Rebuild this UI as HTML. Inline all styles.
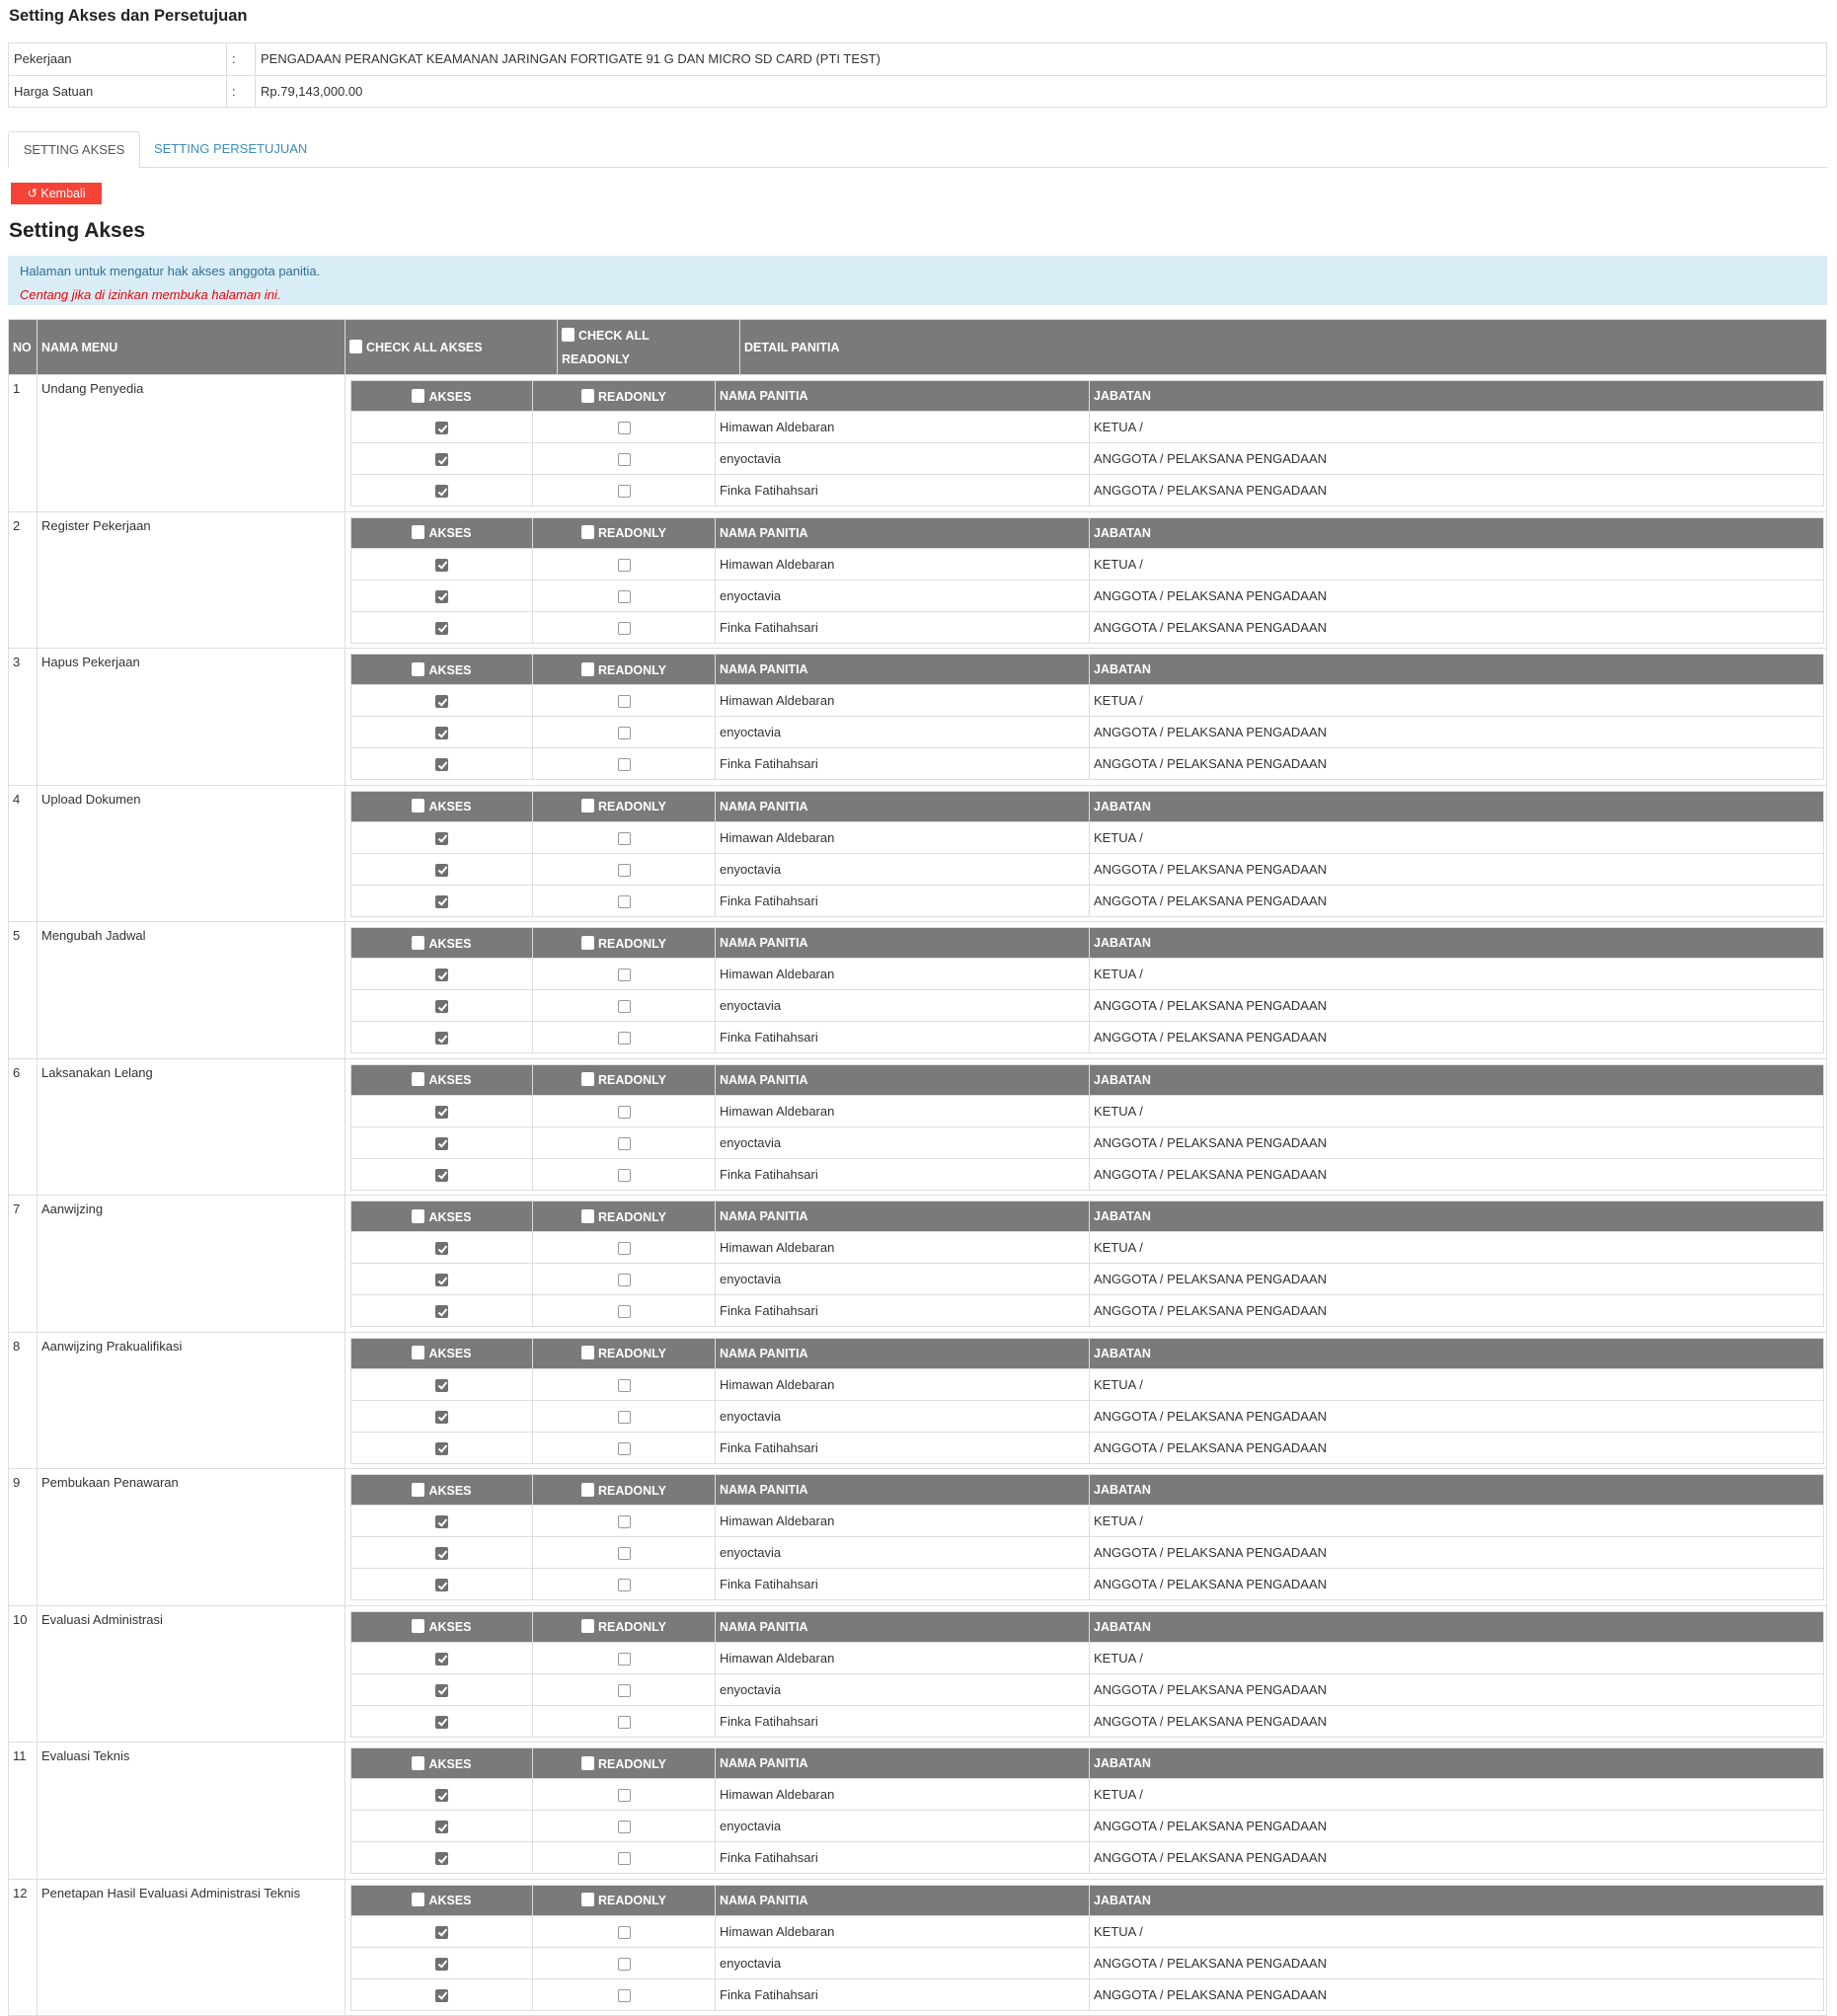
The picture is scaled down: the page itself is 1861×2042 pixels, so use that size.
<!DOCTYPE html>
<html><head><meta charset="utf-8"><style>
*{box-sizing:border-box}
body{margin:0;width:1861px;height:2007px;overflow:hidden;background:#fff;font-family:"Liberation Sans",Arial,sans-serif;color:#333;font-size:13px;position:relative}
h1{position:absolute;left:9px;top:7px;margin:0;font-size:16.5px;font-weight:bold;color:#222}
table{border-collapse:collapse;table-layout:fixed}
.info{position:absolute;left:8px;top:43px;width:1843px}
.info td{border:1px solid #ddd;height:32.5px;padding:0 5px;font-size:13px}
.tabs{position:absolute;left:8px;top:133px;width:1843px;height:37px;border-bottom:1px solid #ddd}
.tab1{position:absolute;left:0;top:0;width:134px;height:37px;border:1px solid #ddd;border-bottom:1px solid #fff;border-radius:3px 3px 0 0;text-align:center;line-height:35px;font-size:13px;color:#555;background:#fff}
.tab2{position:absolute;left:148px;top:0;line-height:35px;font-size:13px;color:#3c8dbc}
.btn{position:absolute;left:11px;top:185px;width:92px;height:22px;background:#f44336;color:#fff;font-size:12.5px;line-height:22px;text-align:center}
h2{position:absolute;left:9px;top:222px;margin:0;font-size:21px;font-weight:bold;color:#222}
.alert{position:absolute;left:8px;top:259px;width:1843px;height:50px;background:#d9edf7;padding:4px 12px;font-size:13px;line-height:24px}
.main{position:absolute;left:8px;top:323px;width:1843px}
.main th{background:#7a7a7a;color:#fff;font-weight:bold;font-size:12.5px;text-align:left;border:1px solid #ddd;padding:0 4px;height:56px;line-height:24px}
.main td.o{border:1px solid #ddd;vertical-align:top;padding:0;height:138.5px;font-size:13px}
.main td.t{padding:6px 4px}
.main td.n{padding:0}
.sub{margin:5px 0 0 5px;width:1493px}
.sub th{background:#7a7a7a;color:#fff;font-weight:bold;font-size:12.5px;height:31px;line-height:normal;border:1px solid #ddd;padding:0 4px;text-align:left}
.sub th.c{text-align:center}
.sub td{border:1px solid #ddd;height:32px;padding:0 4px;font-size:13px}
.sub td.c{text-align:center}
.cb{display:inline-block;width:13px;height:13px;border:1px solid #999;border-radius:2px;background:#fff;vertical-align:middle;position:relative}
.hb{display:inline-block;width:13px;height:14px;background:#fff;border-radius:2px;vertical-align:-2px;margin-right:4px}
.ck{background:#6f6f6f;border-color:#6f6f6f}
.ck:after{content:"";position:absolute;left:3.5px;top:0.5px;width:3px;height:7px;border:solid #fff;border-width:0 2px 2px 0;transform:rotate(40deg)}
</style></head><body>
<h1>Setting Akses dan Persetujuan</h1>
<table class="info"><colgroup><col style="width:221px"><col style="width:29px"><col></colgroup>
<tr><td>Pekerjaan</td><td>:</td><td>PENGADAAN PERANGKAT KEAMANAN JARINGAN FORTIGATE 91 G DAN MICRO SD CARD (PTI TEST)</td></tr>
<tr><td>Harga Satuan</td><td>:</td><td>Rp.79,143,000.00</td></tr></table>
<div class="tabs"><div class="tab1">SETTING AKSES</div><div class="tab2">SETTING PERSETUJUAN</div></div>
<div class="btn">&#x21BA; Kembali</div>
<h2>Setting Akses</h2>
<div class="alert"><div style="color:#31708f">Halaman untuk mengatur hak akses anggota panitia.</div><div style="color:#e00;font-style:italic">Centang jika di izinkan membuka halaman ini.</div></div>
<table class="main"><colgroup><col style="width:29px"><col style="width:312px"><col style="width:215px"><col style="width:185px"><col></colgroup>
<tr><th>NO</th><th>NAMA MENU</th><th><span class="hb"></span>CHECK ALL AKSES</th><th><span class="hb"></span>CHECK ALL<br>READONLY</th><th>DETAIL PANITIA</th></tr>
<tr><td class="o t">1</td><td class="o t">Undang Penyedia</td><td class="o n" colspan="3"><table class="sub"><colgroup><col style="width:184px"><col style="width:185px"><col style="width:379px"><col></colgroup><tr><th class="c"><span class="hb"></span>AKSES</th><th class="c"><span class="hb"></span>READONLY</th><th>NAMA PANITIA</th><th>JABATAN</th></tr><tr><td class="c"><span class="cb ck"></span></td><td class="c"><span class="cb"></span></td><td>Himawan Aldebaran</td><td>KETUA /</td></tr><tr><td class="c"><span class="cb ck"></span></td><td class="c"><span class="cb"></span></td><td>enyoctavia</td><td>ANGGOTA / PELAKSANA PENGADAAN</td></tr><tr><td class="c"><span class="cb ck"></span></td><td class="c"><span class="cb"></span></td><td>Finka Fatihahsari</td><td>ANGGOTA / PELAKSANA PENGADAAN</td></tr></table></td></tr>
<tr><td class="o t">2</td><td class="o t">Register Pekerjaan</td><td class="o n" colspan="3"><table class="sub"><colgroup><col style="width:184px"><col style="width:185px"><col style="width:379px"><col></colgroup><tr><th class="c"><span class="hb"></span>AKSES</th><th class="c"><span class="hb"></span>READONLY</th><th>NAMA PANITIA</th><th>JABATAN</th></tr><tr><td class="c"><span class="cb ck"></span></td><td class="c"><span class="cb"></span></td><td>Himawan Aldebaran</td><td>KETUA /</td></tr><tr><td class="c"><span class="cb ck"></span></td><td class="c"><span class="cb"></span></td><td>enyoctavia</td><td>ANGGOTA / PELAKSANA PENGADAAN</td></tr><tr><td class="c"><span class="cb ck"></span></td><td class="c"><span class="cb"></span></td><td>Finka Fatihahsari</td><td>ANGGOTA / PELAKSANA PENGADAAN</td></tr></table></td></tr>
<tr><td class="o t">3</td><td class="o t">Hapus Pekerjaan</td><td class="o n" colspan="3"><table class="sub"><colgroup><col style="width:184px"><col style="width:185px"><col style="width:379px"><col></colgroup><tr><th class="c"><span class="hb"></span>AKSES</th><th class="c"><span class="hb"></span>READONLY</th><th>NAMA PANITIA</th><th>JABATAN</th></tr><tr><td class="c"><span class="cb ck"></span></td><td class="c"><span class="cb"></span></td><td>Himawan Aldebaran</td><td>KETUA /</td></tr><tr><td class="c"><span class="cb ck"></span></td><td class="c"><span class="cb"></span></td><td>enyoctavia</td><td>ANGGOTA / PELAKSANA PENGADAAN</td></tr><tr><td class="c"><span class="cb ck"></span></td><td class="c"><span class="cb"></span></td><td>Finka Fatihahsari</td><td>ANGGOTA / PELAKSANA PENGADAAN</td></tr></table></td></tr>
<tr><td class="o t">4</td><td class="o t">Upload Dokumen</td><td class="o n" colspan="3"><table class="sub"><colgroup><col style="width:184px"><col style="width:185px"><col style="width:379px"><col></colgroup><tr><th class="c"><span class="hb"></span>AKSES</th><th class="c"><span class="hb"></span>READONLY</th><th>NAMA PANITIA</th><th>JABATAN</th></tr><tr><td class="c"><span class="cb ck"></span></td><td class="c"><span class="cb"></span></td><td>Himawan Aldebaran</td><td>KETUA /</td></tr><tr><td class="c"><span class="cb ck"></span></td><td class="c"><span class="cb"></span></td><td>enyoctavia</td><td>ANGGOTA / PELAKSANA PENGADAAN</td></tr><tr><td class="c"><span class="cb ck"></span></td><td class="c"><span class="cb"></span></td><td>Finka Fatihahsari</td><td>ANGGOTA / PELAKSANA PENGADAAN</td></tr></table></td></tr>
<tr><td class="o t">5</td><td class="o t">Mengubah Jadwal</td><td class="o n" colspan="3"><table class="sub"><colgroup><col style="width:184px"><col style="width:185px"><col style="width:379px"><col></colgroup><tr><th class="c"><span class="hb"></span>AKSES</th><th class="c"><span class="hb"></span>READONLY</th><th>NAMA PANITIA</th><th>JABATAN</th></tr><tr><td class="c"><span class="cb ck"></span></td><td class="c"><span class="cb"></span></td><td>Himawan Aldebaran</td><td>KETUA /</td></tr><tr><td class="c"><span class="cb ck"></span></td><td class="c"><span class="cb"></span></td><td>enyoctavia</td><td>ANGGOTA / PELAKSANA PENGADAAN</td></tr><tr><td class="c"><span class="cb ck"></span></td><td class="c"><span class="cb"></span></td><td>Finka Fatihahsari</td><td>ANGGOTA / PELAKSANA PENGADAAN</td></tr></table></td></tr>
<tr><td class="o t">6</td><td class="o t">Laksanakan Lelang</td><td class="o n" colspan="3"><table class="sub"><colgroup><col style="width:184px"><col style="width:185px"><col style="width:379px"><col></colgroup><tr><th class="c"><span class="hb"></span>AKSES</th><th class="c"><span class="hb"></span>READONLY</th><th>NAMA PANITIA</th><th>JABATAN</th></tr><tr><td class="c"><span class="cb ck"></span></td><td class="c"><span class="cb"></span></td><td>Himawan Aldebaran</td><td>KETUA /</td></tr><tr><td class="c"><span class="cb ck"></span></td><td class="c"><span class="cb"></span></td><td>enyoctavia</td><td>ANGGOTA / PELAKSANA PENGADAAN</td></tr><tr><td class="c"><span class="cb ck"></span></td><td class="c"><span class="cb"></span></td><td>Finka Fatihahsari</td><td>ANGGOTA / PELAKSANA PENGADAAN</td></tr></table></td></tr>
<tr><td class="o t">7</td><td class="o t">Aanwijzing</td><td class="o n" colspan="3"><table class="sub"><colgroup><col style="width:184px"><col style="width:185px"><col style="width:379px"><col></colgroup><tr><th class="c"><span class="hb"></span>AKSES</th><th class="c"><span class="hb"></span>READONLY</th><th>NAMA PANITIA</th><th>JABATAN</th></tr><tr><td class="c"><span class="cb ck"></span></td><td class="c"><span class="cb"></span></td><td>Himawan Aldebaran</td><td>KETUA /</td></tr><tr><td class="c"><span class="cb ck"></span></td><td class="c"><span class="cb"></span></td><td>enyoctavia</td><td>ANGGOTA / PELAKSANA PENGADAAN</td></tr><tr><td class="c"><span class="cb ck"></span></td><td class="c"><span class="cb"></span></td><td>Finka Fatihahsari</td><td>ANGGOTA / PELAKSANA PENGADAAN</td></tr></table></td></tr>
<tr><td class="o t">8</td><td class="o t">Aanwijzing Prakualifikasi</td><td class="o n" colspan="3"><table class="sub"><colgroup><col style="width:184px"><col style="width:185px"><col style="width:379px"><col></colgroup><tr><th class="c"><span class="hb"></span>AKSES</th><th class="c"><span class="hb"></span>READONLY</th><th>NAMA PANITIA</th><th>JABATAN</th></tr><tr><td class="c"><span class="cb ck"></span></td><td class="c"><span class="cb"></span></td><td>Himawan Aldebaran</td><td>KETUA /</td></tr><tr><td class="c"><span class="cb ck"></span></td><td class="c"><span class="cb"></span></td><td>enyoctavia</td><td>ANGGOTA / PELAKSANA PENGADAAN</td></tr><tr><td class="c"><span class="cb ck"></span></td><td class="c"><span class="cb"></span></td><td>Finka Fatihahsari</td><td>ANGGOTA / PELAKSANA PENGADAAN</td></tr></table></td></tr>
<tr><td class="o t">9</td><td class="o t">Pembukaan Penawaran</td><td class="o n" colspan="3"><table class="sub"><colgroup><col style="width:184px"><col style="width:185px"><col style="width:379px"><col></colgroup><tr><th class="c"><span class="hb"></span>AKSES</th><th class="c"><span class="hb"></span>READONLY</th><th>NAMA PANITIA</th><th>JABATAN</th></tr><tr><td class="c"><span class="cb ck"></span></td><td class="c"><span class="cb"></span></td><td>Himawan Aldebaran</td><td>KETUA /</td></tr><tr><td class="c"><span class="cb ck"></span></td><td class="c"><span class="cb"></span></td><td>enyoctavia</td><td>ANGGOTA / PELAKSANA PENGADAAN</td></tr><tr><td class="c"><span class="cb ck"></span></td><td class="c"><span class="cb"></span></td><td>Finka Fatihahsari</td><td>ANGGOTA / PELAKSANA PENGADAAN</td></tr></table></td></tr>
<tr><td class="o t">10</td><td class="o t">Evaluasi Administrasi</td><td class="o n" colspan="3"><table class="sub"><colgroup><col style="width:184px"><col style="width:185px"><col style="width:379px"><col></colgroup><tr><th class="c"><span class="hb"></span>AKSES</th><th class="c"><span class="hb"></span>READONLY</th><th>NAMA PANITIA</th><th>JABATAN</th></tr><tr><td class="c"><span class="cb ck"></span></td><td class="c"><span class="cb"></span></td><td>Himawan Aldebaran</td><td>KETUA /</td></tr><tr><td class="c"><span class="cb ck"></span></td><td class="c"><span class="cb"></span></td><td>enyoctavia</td><td>ANGGOTA / PELAKSANA PENGADAAN</td></tr><tr><td class="c"><span class="cb ck"></span></td><td class="c"><span class="cb"></span></td><td>Finka Fatihahsari</td><td>ANGGOTA / PELAKSANA PENGADAAN</td></tr></table></td></tr>
<tr><td class="o t">11</td><td class="o t">Evaluasi Teknis</td><td class="o n" colspan="3"><table class="sub"><colgroup><col style="width:184px"><col style="width:185px"><col style="width:379px"><col></colgroup><tr><th class="c"><span class="hb"></span>AKSES</th><th class="c"><span class="hb"></span>READONLY</th><th>NAMA PANITIA</th><th>JABATAN</th></tr><tr><td class="c"><span class="cb ck"></span></td><td class="c"><span class="cb"></span></td><td>Himawan Aldebaran</td><td>KETUA /</td></tr><tr><td class="c"><span class="cb ck"></span></td><td class="c"><span class="cb"></span></td><td>enyoctavia</td><td>ANGGOTA / PELAKSANA PENGADAAN</td></tr><tr><td class="c"><span class="cb ck"></span></td><td class="c"><span class="cb"></span></td><td>Finka Fatihahsari</td><td>ANGGOTA / PELAKSANA PENGADAAN</td></tr></table></td></tr>
<tr><td class="o t">12</td><td class="o t">Penetapan Hasil Evaluasi Administrasi Teknis</td><td class="o n" colspan="3"><table class="sub"><colgroup><col style="width:184px"><col style="width:185px"><col style="width:379px"><col></colgroup><tr><th class="c"><span class="hb"></span>AKSES</th><th class="c"><span class="hb"></span>READONLY</th><th>NAMA PANITIA</th><th>JABATAN</th></tr><tr><td class="c"><span class="cb ck"></span></td><td class="c"><span class="cb"></span></td><td>Himawan Aldebaran</td><td>KETUA /</td></tr><tr><td class="c"><span class="cb ck"></span></td><td class="c"><span class="cb"></span></td><td>enyoctavia</td><td>ANGGOTA / PELAKSANA PENGADAAN</td></tr><tr><td class="c"><span class="cb ck"></span></td><td class="c"><span class="cb"></span></td><td>Finka Fatihahsari</td><td>ANGGOTA / PELAKSANA PENGADAAN</td></tr></table></td></tr>
</table>
</body></html>
